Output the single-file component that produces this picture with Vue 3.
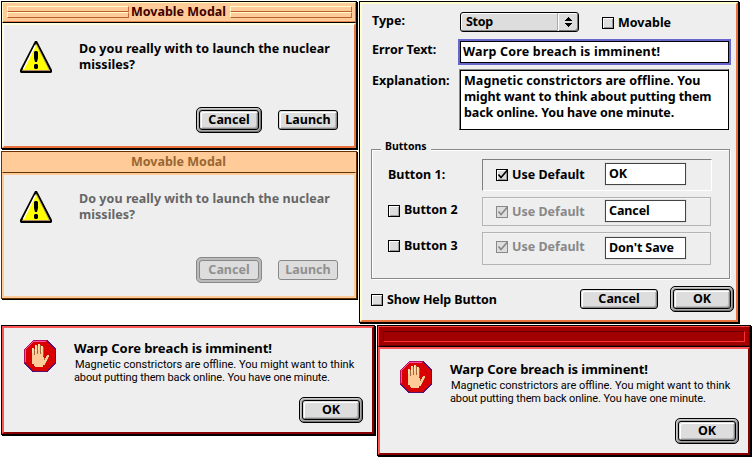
<script setup>
const modals = [
  { id: 'active', inactive: false },
  { id: 'inactive', inactive: true },
]

const alerts = [
  { id: 'fixed', titled: false },
  { id: 'movable', titled: true },
]

const rows = [
  { label: 'Button 1:', checkbox: false, enabled: true, value: 'OK' },
  { label: 'Button 2', checkbox: true, enabled: false, value: 'Cancel' },
  { label: 'Button 3', checkbox: true, enabled: false, value: "Don't Save" },
]
</script>

<template>
  <main class="desktop">
    <section
      v-for="m in modals"
      :key="m.id"
      class="window modal"
      :class="['modal-' + m.id, { inactive: m.inactive }]"
    >
      <header class="titlebar">
        <div class="stripes"><i></i><i></i></div>
        <h1>Movable Modal</h1>
        <div class="stripes"><i></i><i></i></div>
      </header>
      <div class="frame modal-body">
        <div class="message">
          <svg class="icon" viewBox="0 0 32 32" width="32" height="32">
            <path d="M15 0h2l15 29v2l-1 1H1l-1-1v-2z" fill="#000" />
            <path d="M16 2.500L29.500 29h-27z" fill="#ff0" />
            <path d="M15.300 4.500L3.500 28" stroke="#fff" stroke-width="1.500" fill="none" />
            <path d="M16.500 3.500L29.300 29" stroke="#b0a070" stroke-width="1" fill="none" />
            <path d="M2 29h28v1H2z" fill="#b08a5c" />
            <path d="M15 10h2l1 1v6l-1 4h-2l-1-4v-6z M15 23h2l1 1v3l-1 1h-2l-1-1v-3z" fill="#000" />
          </svg>
          <p class="body-text">Do you really with to launch the nuclear<br />missiles?</p>
        </div>
        <div class="actions">
          <span class="ring"><button class="push w60">Cancel</button></span>
          <button class="push w60">Launch</button>
        </div>
      </div>
    </section>

    <section class="window settings">
      <div class="frame settings-body">
        <div class="row type-row">
          <label class="label">Type:</label>
          <div class="popup">
            <span>Stop</span>
            <b>
              <svg width="7" height="11" viewBox="0 0 7 11" shape-rendering="crispEdges">
                <path d="M3 0h1v1h1v1h1v1h1v1H0V3h1V2h1V1h1zM0 6h7v1H6v1H5v1H4v1H3V9H2V8H1V7H0z" fill="#000" />
              </svg>
            </b>
          </div>
          <span class="check"></span>
          <label>Movable</label>
        </div>
        <div class="row error-row">
          <label class="label">Error Text:</label>
          <div class="focus"><div class="field">Warp Core breach is imminent!</div></div>
        </div>
        <div class="row explain-row">
          <label class="label">Explanation:</label>
          <div class="area">
            <p class="wide">Magnetic constrictors are offline. You</p>
            <p class="tight">might want to think about putting them</p>
            <p class="tight">back online. You have one minute.</p>
          </div>
        </div>
        <div class="group">
          <div class="legend">Buttons</div>
          <div v-for="(r, i) in rows" :key="r.label" class="button-row" :class="'row-' + (i + 1)">
            <div class="name">
              <span v-if="r.checkbox" class="check"></span>
              <label>{{ r.label }}</label>
            </div>
            <div class="well" :class="{ off: !r.enabled }">
              <span class="check">
                <svg width="13" height="12" viewBox="0 0 13 12">
                  <path d="M2.5 5.5L5 8.5L11.5 1" fill="none" stroke="currentColor" stroke-width="1.7" />
                </svg>
              </span>
              <label>Use Default</label>
              <div class="input">{{ r.value }}</div>
            </div>
          </div>
        </div>
        <div class="footer">
          <span class="check"></span>
          <label>Show Help Button</label>
          <button class="push w78">Cancel</button>
          <span class="ring"><button class="push w58">OK</button></span>
        </div>
      </div>
    </section>

    <section v-for="a in alerts" :key="a.id" class="window alert" :class="'alert-' + a.id">
      <header v-if="a.titled" class="redbar"><div></div></header>
      <div class="frame alert-body">
        <div class="message">
          <svg class="icon" viewBox="0 0 32 32" width="32" height="32" shape-rendering="crispEdges">
            <path d="M9 0h14l9 9v14l-9 9H9l-9-9V9z" fill="#d80000" />
            <path d="M.5 23V9.500L9.500.5H23" fill="none" stroke="#b01060" />
            <path d="M1.500 22V9.500L9.500 1.500H22" fill="none" stroke="#ff50a0" />
            <path d="M23 .5L31.500 9V23L23 31.500H9L.5 23" fill="none" stroke="#5a1070" />
            <path d="M10 9h1v8h-1zM13 6h1v8h-1zM16 5h1v9h-1zM19 7h1v9h-1zM20 18h1v3h-1zM24 15h1v3h-1v2h-1v2h-1v2h-1v1h-1v1h-1v1h-8v-1h9z" fill="#a06838" />
            <path d="M8 8h2v7h1V5h2v9h1V4h2v10h1V6h2v11h1v3h1v-2h1v-2h1v-1h2v2h-1v2h-1v2h-1v2h-1v2h-2v2h-8v-1h-1v-2H8z" fill="#fc9" />
            <path d="M8 8h1v5H8zM11 5h1v6h-1zM14 4h1v6h-1zM17 6h1v6h-1z" fill="#ffe4b4" />
          </svg>
          <div>
            <h2>Warp Core breach is imminent!</h2>
            <p class="small">Magnetic constrictors are offline. You might want to think</p>
            <p class="small second">about putting them back online. You have one minute.</p>
          </div>
        </div>
        <div class="actions">
          <span class="ring"><button class="push w58">OK</button></span>
        </div>
      </div>
    </section>
  </main>
</template>

<style>
body {
  margin: 0;
  background: #fff;
}
</style>

<style scoped>
* {
  box-sizing: border-box;
}
.desktop {
  position: relative;
  width: 753px;
  height: 458px;
  overflow: hidden;
  background: #fff;
  color: #000;
  font: bold 12.5px/16px "Noto Sans", "Open Sans", sans-serif;
  white-space: nowrap;
}
h1,
h2,
p {
  margin: 0;
}
.window {
  position: absolute;
  display: flex;
  flex-direction: column;
  border: 1px solid #000;
  box-shadow: 1px 1px 0 #000;
}
.frame {
  flex: 1;
  display: flex;
  flex-direction: column;
  background: #eee;
}

/* movable modals */
.modal {
  left: 1px;
  width: 356px;
  height: 148px;
}
.modal-active {
  top: 1px;
}
.modal-inactive {
  top: 151px;
}
.titlebar {
  height: 21px;
  display: flex;
  align-items: flex-start;
  justify-content: space-between;
  padding: 3px 3px 0 4px;
  background: #fc9;
  border: solid;
  border-width: 1px 1px 0 1px;
  border-color: #ffc #c63 #c63 #ffc;
  border-bottom: 1px solid #000;
  box-shadow: inset 0 -1px #e8864c;
}
h1 {
  font-size: 12.5px;
  line-height: 16px;
  margin: -2px 0 0 -2px;
  color: #400000;
}
.stripes {
  width: 122px;
  height: 12px;
}
.stripes i {
  display: block;
  height: 6px;
  border: 1px solid;
  border-color: #ffc #c96b38 #b86030 #ffc;
  background: #fc9;
}
.modal .frame {
  border: 2px solid;
  border-color: #ffd #e8733c #e8733c #ffd;
}
.message {
  display: flex;
}
.icon {
  flex: none;
  display: block;
}
.modal-body {
  padding: 16px 16px 0 16px;
}
.modal-body .message {
  height: 66px;
}
.body-text {
  margin: 0 0 0 27px;
  letter-spacing: 0.05px;
}
.actions {
  display: flex;
  align-items: center;
  justify-content: flex-end;
  gap: 16px;
}
.push {
  height: 20px;
  padding: 0;
  border: 1px solid #000;
  border-radius: 3px;
  background: #ddd;
  box-shadow: inset 1px 1px #ddd, inset -1px -1px #888, inset 2px 2px #fff, inset -2px -2px #bbb;
  color: #000;
  font: inherit;
  line-height: 16px;
  text-align: center;
}
.w60 { width: 60px; }
.w78 { width: 78px; }
.w58 { width: 58px; }
.ring {
  display: flex;
  padding: 2px;
  border: 1px solid #000;
  border-radius: 5px;
  background: #aaa;
  box-shadow: inset 1px 1px #ccc, inset -1px -1px #777;
}
.inactive {
  border-color: #630;
}
.inactive .titlebar {
  border-color: #fc9 #fc9 #630;
  box-shadow: none;
}
.inactive .stripes {
  visibility: hidden;
}
.inactive h1 {
  color: #963;
}
.inactive .frame {
  border-color: #fc9;
}
.inactive .body-text {
  color: #666;
}
.inactive .push {
  border-color: #888;
  box-shadow: none;
  color: #909090;
}
.inactive .ring {
  border-color: #888;
  background: #bbb;
  box-shadow: none;
}

/* settings dialog */
.settings {
  left: 359px;
  top: 1px;
  width: 380px;
  height: 322px;
}
.settings-body {
  border: 2px solid;
  border-color: #ffc #e8733c #e8733c #ffc;
  padding: 8px 0 0 9px;
}
.row {
  display: flex;
  align-items: flex-start;
}
.label {
  width: 89px;
  padding-left: 1px;
}
.type-row {
  height: 27px;
}
.type-row > label {
  margin-top: 1px;
}
.popup {
  width: 119px;
  height: 20px;
  display: flex;
  justify-content: space-between;
  border: 1px solid #000;
  border-radius: 3px;
  background: #ddd;
  box-shadow: inset 1px 1px #fff, inset -1px -1px #888;
  padding: 0 0 0 5px;
}
.popup span {
  padding-top: 1px;
  letter-spacing: -0.3px;
}
.popup b {
  width: 20px;
  display: flex;
  align-items: center;
  justify-content: center;
  border-left: 1px solid #fff;
  box-shadow: -1px 0 #aaa, inset -1px -1px #777;
  border-radius: 0 2px 2px 0;
}
.check {
  flex: none;
  display: block;
  width: 12px;
  height: 12px;
  border: 1px solid #000;
  background: #ddd;
  box-shadow: inset 1px 1px #fff, inset -1px -1px #999;
}
.check svg {
  display: block;
  margin: -1px;
  overflow: visible;
}
.type-row .check {
  margin: 5px 4px 0 23px;
}
.type-row .check + label {
  margin-top: 3px;
}
.error-row {
  height: 30px;
}
.error-row .label {
  width: 87px;
  margin-top: 3px;
}
.focus {
  width: 273px;
  height: 26px;
  border: 2px solid #66c;
}
.field {
  height: 22px;
  border: 1px solid #000;
  background: #fff;
  padding: 2px 0 0 2px;
  letter-spacing: 0.19px;
}
.explain-row {
  height: 80px;
}
.explain-row .label {
  margin-top: 4px;
  width: 88px;
}
.area {
  width: 270px;
  height: 61px;
  border: 1px solid #000;
  border-color: #888 #000 #000 #888;
  box-shadow: inset 1px 1px #000;
  background: #fff;
  padding: 3px 0 0 4px;
}
.wide {
  letter-spacing: 0.07px;
}
.tight {
  letter-spacing: -0.11px;
}
.group {
  width: 359px;
  height: 130px;
  border: 1px solid #888;
  box-shadow: 1px 1px #fff, inset 1px 1px #fff;
  padding-left: 16px;
}
.legend {
  width: 50px;
  height: 14px;
  margin: -10px 0 5px -7px;
  padding-left: 4px;
  background: #eee;
  font-size: 10.5px;
  line-height: 13px;
}
.button-row {
  display: flex;
  align-items: flex-start;
}
.row-1 { height: 38px; }
.row-2 { height: 35px; }
.row-3 { height: 33px; }
.name {
  width: 94px;
  display: flex;
  gap: 4px;
}
.row-1 .name { padding-top: 7px; }
.row-2 .name { padding-top: 5px; }
.row-3 .name { padding-top: 5px; }
.name .check {
  margin-top: 3px;
}
.row-1 .name label,
.row-3 .name label {
  margin-top: 1px;
}
.well {
  width: 230px;
  height: 32px;
  display: flex;
  align-items: center;
  border: 1px solid;
  border-color: #808080 #fff #fff #808080;
  padding-left: 13px;
}
.well label {
  width: 93px;
  margin-left: 4px;
}
.well.off {
  width: 229px;
  height: 29px;
  border-color: #b4b4b4;
  box-shadow: inset 1px 1px #f4f4f4;
}
.row-3 .well.off {
  height: 33px;
}
.row-1 .well .check { margin-top: -1px; }
.row-3 .well .check { margin-top: -3px; }
.row-3 .well label { margin-top: -3px; }
.off .check,
.off label {
  color: #888;
}
.off .check {
  border-color: #888;
  box-shadow: none;
}
.input {
  width: 81px;
  height: 22px;
  border: 1px solid #444;
  outline: 1px solid #e2e2e2;
  background: #fff;
  color: #000;
  line-height: 19px;
  padding-left: 3px;
  letter-spacing: -0.1px;
}
.row-1 .input { margin-top: -2px; }
.row-2 .input,
.row-3 .input { margin-top: -1px; }
.footer {
  display: flex;
  align-items: center;
  margin-top: 7px;
  height: 26px;
}
.footer label {
  width: 193px;
  margin: 2px 0 0 4px;
  letter-spacing: -0.12px;
}
.footer .check {
  margin-top: 1px;
}
.footer .ring {
  margin-left: 12px;
}

/* alerts */
.alert {
  top: 325px;
  width: 374px;
}
.alert-fixed {
  left: 1px;
  height: 110px;
}
.alert-movable {
  left: 377px;
  height: 131px;
}
.alert .frame {
  border: 2px solid;
  border-color: #f55 #800 #800 #f55;
  padding: 12px 9px 0 20px;
}
.alert .message {
  height: 57px;
}
.alert .message > div {
  margin: 0 0 0 18px;
}
h2 {
  font-size: 13px;
  line-height: 16px;
  letter-spacing: -0.05px;
}
.small {
  margin: 2px 0 0 1px;
  font: 11px/13px Roboto, sans-serif;
}
.small.second {
  margin: 0;
  letter-spacing: -0.12px;
}
.redbar {
  height: 21px;
  padding: 4px;
  background: #a00000;
  border: 1px solid;
  border-color: #ff4444 #600 #000 #ff4444;
  box-shadow: inset 0 -1px #700000;
}
.redbar div {
  height: 11px;
  border: 1px solid;
  border-color: #600 #f33 #f33 #600;
}
</style>
